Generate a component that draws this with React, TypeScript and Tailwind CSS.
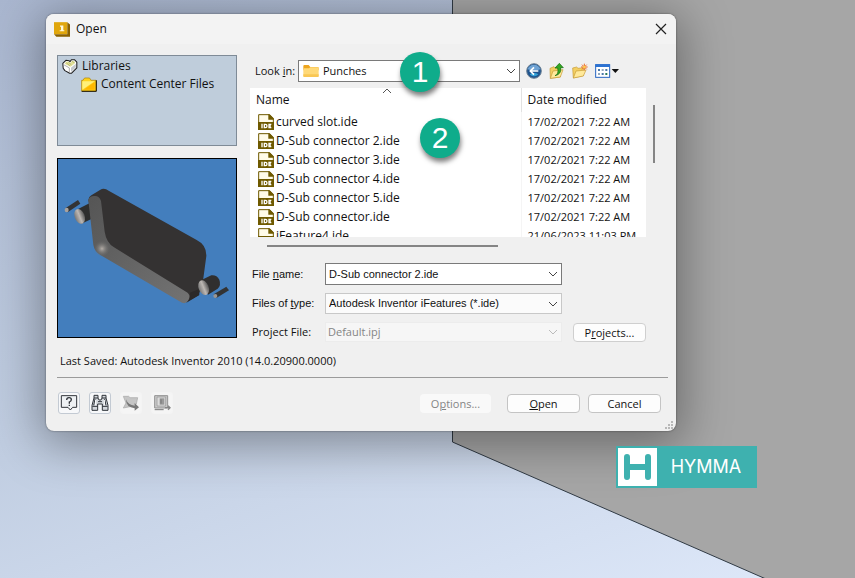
import { useState } from "react";

type IconProps = { className?: string };

const files = [
  { Name: "curved slot.ide", Modified: "17/02/2021 7:22 AM" },
  { Name: "D-Sub connector 2.ide", Modified: "17/02/2021 7:22 AM" },
  { Name: "D-Sub connector 3.ide", Modified: "17/02/2021 7:22 AM" },
  { Name: "D-Sub connector 4.ide", Modified: "17/02/2021 7:22 AM" },
  { Name: "D-Sub connector 5.ide", Modified: "17/02/2021 7:22 AM" },
  { Name: "D-Sub connector.ide", Modified: "17/02/2021 7:22 AM" },
  { Name: "iFeature4.ide", Modified: "21/06/2023 11:03 PM" },
];

const AppIcon = () => (
  <svg viewBox="0 0 48 44" className="w-4 h-[15px] shrink-0">
    <path d="M0 0H40V36H0Z" fill="#e0a60c" />
    <path d="M40 0L48 7V44H7L0 36H40Z" fill="#8a6100" />
    <path d="M18 10H28V24H31V27H17V24H21V14H18Z" fill="#fff8dc" />
  </svg>
);

const LibraryIcon = () => (
  <svg viewBox="0 0 46 44" className="w-4 h-[15px] shrink-0">
    <path d="M2 13L11 4L20 5L23 8L27 2H36L43 9V26L27 42H22L8 34L3 27Z" fill="#fff" stroke="#1b1b1b" strokeWidth="3" strokeLinejoin="round" />
    <path d="M7 14L13 7L20 8L24 12L29 5L38 8L36 14L24 23Z" fill="#e3e09a" />
    <path d="M12 11L23 20M18 9L27 17M29 7L36 11" stroke="#a3ad5c" strokeWidth="2" />
    <path d="M5 17L21 26V39" fill="none" stroke="#8a8a8a" strokeWidth="2" />
    <path d="M26 26L40 14V25L26 38Z" fill="#c4c8ce" />
  </svg>
);

const FolderIcon = () => (
  <svg viewBox="0 0 49 44" className="w-4 h-[15px] shrink-0">
    <path d="M2 9H6L11 2H26L31 9H46V42H2Z" fill="#ffd21c" stroke="#a97c00" strokeWidth="2" />
    <path d="M4 12H42L4 38Z" fill="#fff07a" />
    <path d="M42 14V38H8Z" fill="#ffb800" />
    <path d="M47 9V43H2" fill="none" stroke="#1c1400" strokeWidth="3" />
  </svg>
);

const PunchesFolder = ({ className }: IconProps) => (
  <svg viewBox="0 0 48 40" className={className}>
    <path d="M1 5Q1 2 4 2H17L22 8H44Q47 8 47 11V18H1Z" fill="#eda51f" />
    <path d="M1 14Q1 12 4 12H18L22 9H44Q47 9 47 12V35Q47 38 44 38H4Q1 38 1 35Z" fill="#ffd978" />
    <path d="M1 30H47V35Q47 38 44 38H4Q1 38 1 35Z" fill="#f9c755" />
  </svg>
);

const IdeIcon = () => (
  <svg viewBox="0 0 48 48" className="w-4 h-4 shrink-0">
    <path d="M2 2H34L46 14V46H2Z" fill="#fffbe8" stroke="#6f5a00" strokeWidth="3" />
    <path d="M31 1H35L47 13V17H31Z" fill="#6f5a00" />
    <path d="M0 24H48V48H0Z" fill="#6f5a00" />
    <path d="M12 29V43M19 31H22Q27 31 27 36T22 41H19ZM40 31H33V41H40M33 36H39" fill="none" stroke="#fff" strokeWidth="4" />
  </svg>
);

const BackIcon = () => (
  <svg viewBox="0 0 48 48" className="w-4 h-4">
    <circle cx="24" cy="24" r="22" fill="#20558f" stroke="#6f8294" strokeWidth="3" />
    <path d="M5 19A20 20 0 0 1 43 19Q24 27 5 19Z" fill="#6fa3d4" />
    <path d="M11 34A17 17 0 0 0 37 34Q24 26 11 34Z" fill="#32a3d8" />
    <path d="M24 13L13 24L24 35M14 24H37" fill="none" stroke="#fff" strokeWidth="5" />
  </svg>
);

const UpFolderIcon = () => (
  <svg viewBox="0 0 48 48" className="w-4 h-4">
    <path d="M3 16L15 11L19 15L34 14V42L4 46Z" fill="#f3cf62" stroke="#c69a35" strokeWidth="2" />
    <path d="M4 46L12 24L42 20L34 42Z" fill="#ffe99a" stroke="#c69a35" strokeWidth="2" />
    <path d="M18 38Q30 34 26 15H18L31 1L43 14H35Q38 34 18 38Z" fill="#35a822" stroke="#11690e" strokeWidth="2" />
  </svg>
);

const NewFolderIcon = () => (
  <svg viewBox="0 0 48 48" className="w-4 h-4">
    <path d="M2 15L14 12L18 16L34 14V38L4 45Z" fill="#f3cf62" stroke="#c69a35" strokeWidth="2" />
    <path d="M4 45L12 24L42 21L34 39Z" fill="#ffe99a" stroke="#c69a35" strokeWidth="2" />
    <path d="M37 2V22M27 12H47M30 5L44 19M44 5L30 19" stroke="#ed6a24" strokeWidth="3" />
    <circle cx="37" cy="12" r="4" fill="#ffcf4a" />
  </svg>
);

const ViewIcon = () => (
  <svg viewBox="0 0 72 42" className="w-6 h-[14px]">
    <rect x="2" y="2" width="42" height="38" fill="#fff" stroke="#2464c0" strokeWidth="3" />
    <path d="M1 1H45V9H1Z" fill="#2c72d2" />
    <path d="M9 15H15V21H9ZM31 15H37V21H31ZM20 27H26V33H20Z" fill="#4e79a8" />
    <path d="M20 15H26V21H20ZM9 27H15V33H9Z" fill="#8fa7bf" />
    <path d="M31 27H37V33H31Z" fill="#2b7b58" />
    <path d="M50 15H72L61 27Z" fill="#111" />
  </svg>
);

const Chevron = ({ className }: IconProps) => (
  <svg viewBox="0 0 10 6" className={`pointer-events-none absolute right-1 top-1/2 h-[6px] w-[10px] -translate-y-1/2 ${className}`}>
    <path d="M1 1L5 5L9 1" fill="none" stroke="currentColor" strokeWidth="1" />
  </svg>
);

const Preview = () => (
  <svg viewBox="24 27 534 534" className="block w-full" role="img" aria-label="Preview">
    <defs>
      <linearGradient id="edge" x1="0" y1="0" x2="1" y2="1">
        <stop offset="0" stopColor="#555" />
        <stop offset="1" stopColor="#737373" />
      </linearGradient>
      <linearGradient id="rod" x1="0" y1="0" x2="1" y2="0">
        <stop offset="0" stopColor="#777" />
        <stop offset="0.5" stopColor="#bdb8b4" />
        <stop offset="1" stopColor="#555" />
      </linearGradient>
      <radialGradient id="corner">
        <stop offset="0" stopColor="#b4aea8" />
        <stop offset="1" stopColor="#6a6a6a" stopOpacity="0" />
      </radialGradient>
    </defs>
    <path d="M24 27H558V561H24Z" fill="#437ebd" />
    <path d="M46 175L84 150L91 161L53 187Z" fill="#333" />
    <ellipse cx="50" cy="180" rx="6" ry="7" fill="#a8a29e" />
    <path d="M80 179L118 160L126 206L94 221Z" fill="#2e2e2e" />
    <ellipse cx="89" cy="199" rx="15" ry="23" transform="rotate(-22 89 199)" fill="url(#rod)" />
    <path d="M115 150Q115 141 124 136L150 120Q162 112 176 122L440 270Q470 285 469 318L458 400L446 436L410 456L160 300L140 280Z" fill="#343232" />
    <path d="M115 150Q118 137 135 138Q148 138 153 153L164 245Q169 278 192 292L408 425Q424 434 416 450Q409 463 396 458L151 315Q133 304 130 285Z" fill="url(#edge)" />
    <circle cx="156" cy="296" r="24" fill="url(#corner)" />
    <path d="M408 459L448 435L446 418L420 428Q424 444 408 459Z" fill="#2b2929" />
    <path d="M456 389L484 376Q500 374 508 389Q514 406 503 416L474 434Z" fill="#302f2f" />
    <ellipse cx="461" cy="413" rx="15" ry="23" transform="rotate(-22 461 413)" fill="url(#rod)" />
    <path d="M491 433L529 410L537 421L499 444Z" fill="#333" />
    <ellipse cx="496" cy="438" rx="6" ry="6" fill="#9a9693" />
  </svg>
);

const HelpIcon = () => (
  <svg viewBox="0 0 54 54" className="w-[18px] h-[18px]">
    <path d="M4 5H50V40H38L31 48L24 40H4Z" fill="#eef1f4" stroke="#30343a" strokeWidth="3" />
    <path d="M20 18Q20 11 27 11Q34 11 34 17Q34 21 28 24V29M28 32V36" fill="none" stroke="#30343a" strokeWidth="4" />
  </svg>
);

const BinocularsIcon = () => (
  <svg viewBox="0 0 54 54" className="w-[18px] h-[18px]">
    <path d="M9 4H21V12L24 18H30L33 12V4H45V12L51 34V49H34V30H20V49H3V34L9 12Z" fill="#d3d7dc" stroke="#30343a" strokeWidth="3" />
    <path d="M9 12H21M33 12H45M4 37H20M34 37H50M21 23H33M12 15L8 34M41 15L45 34" stroke="#30343a" strokeWidth="3" />
    <path d="M14 18V34M40 18V34" stroke="#fff" strokeWidth="3" />
  </svg>
);

const GotoIcon = () => (
  <svg viewBox="0 0 54 54" className="w-[18px] h-[18px]">
    <path d="M4 7H20L24 11H47L43 30L34 36L4 42L12 27Z" fill="#c5c5c5" stroke="#a6a6a6" strokeWidth="2" />
    <path d="M12 16Q18 33 38 35V27L51 40L38 50V43Q12 40 12 16Z" fill="#777" />
  </svg>
);

const VaultIcon = () => (
  <svg viewBox="0 0 54 54" className="w-[18px] h-[18px]">
    <path d="M5 5H44V42H5Z" fill="#c9c9c9" stroke="#929292" strokeWidth="3" />
    <path d="M12 9H38V36H12Z" fill="#dcdcdc" stroke="#929292" strokeWidth="2" />
    <path d="M20 13H34V32H20Z" fill="#999" />
    <path d="M24 16V29M5 47H32" stroke="#777" strokeWidth="3" />
    <path d="M36 41H52M45 35L51 41L45 47" fill="none" stroke="#858585" strokeWidth="4" />
  </svg>
);

type ToolProps = { label: string; disabled?: boolean; children: React.ReactNode };

const ToolButton = ({ label, disabled, children }: ToolProps) => (
  <button
    type="button"
    aria-label={label}
    disabled={disabled}
    className="flex h-[22px] w-[22px] items-center justify-center rounded-[3px] border border-[#c3cad3] bg-[#f7f8fa] disabled:border-[#f4f4f4] disabled:bg-[#f5f5f5]"
  >
    {children}
  </button>
);

const Callout = ({ n, className }: { n: number; className: string }) => (
  <div className={`absolute flex h-10 w-10 items-center justify-center rounded-full bg-[#0fac8b] font-['Liberation_Sans',sans-serif] text-[30px] leading-none text-white shadow-[1px_4px_5px_rgba(0,0,0,0.5)] ${className}`}>
    {n}
  </div>
);

const OpenDialog = () => {
  const [FileName, setFileName] = useState("D-Sub connector 2.ide");
  const [Folder, setFolder] = useState("Punches");

  return (
    <div role="dialog" aria-label="Open" className="relative w-full max-w-[630px] rounded-lg bg-[#f0f0f0] shadow-[0_8px_48px_6px_rgba(0,0,0,0.36),0_0_2px_rgba(0,0,0,0.5)]">
      <div className="flex h-[30px] items-center gap-[6px] rounded-t-lg bg-[#f3f3f3] pl-2 pr-[9px]">
        <AppIcon />
        <h1 className="flex-1 text-[12px]">Open</h1>
        <button type="button" aria-label="Close">
          <svg viewBox="0 0 12 12" className="h-3 w-3">
            <path d="M1 1L11 11M11 1L1 11" stroke="#222" strokeWidth="1.200" />
          </svg>
        </button>
      </div>

      <div className="flex gap-[13px] px-[11px] pt-[11px]">
        <div className="flex w-[180px] shrink-0 flex-col gap-3">
          <ul className="h-[91px] border border-[#7f8b97] bg-[#bfcddb] pl-1 pt-[1px] text-[12px] leading-[18px]">
            <li>
              <div className="flex items-center gap-1"><LibraryIcon />Libraries</div>
              <ul className="pl-[19px]">
                <li className="flex items-center gap-1"><FolderIcon />Content Center Files</li>
              </ul>
            </li>
          </ul>
          <div className="border border-black">
            <Preview />
          </div>
        </div>

        <div className="min-w-0 flex-1 pt-[5px]">
          <div className="flex items-center pr-[19px]">
            <label htmlFor="lookin" className="w-12 pl-[5px] text-[11px]">Look <u>i</u>n:</label>
            <div className="relative flex-1">
              <PunchesFolder className="pointer-events-none absolute left-[5px] top-1 h-[14px] w-4" />
              <select id="lookin" value={Folder} onChange={(e) => setFolder(e.target.value)} className="block h-[22px] w-full appearance-none border border-[#7a7a7a] bg-white pl-6 text-[11px] leading-5 outline-none">
                <option>Punches</option>
              </select>
              <Chevron className="text-[#444]" />
            </div>
            <div className="flex w-[126px] items-center gap-[7px] pl-[6px]">
              <button type="button" aria-label="Back"><BackIcon /></button>
              <button type="button" aria-label="Up one level"><UpFolderIcon /></button>
              <button type="button" aria-label="New folder"><NewFolderIcon /></button>
              <button type="button" aria-label="View menu"><ViewIcon /></button>
            </div>
          </div>

          <div className="mt-[6px] flex">
            <div className="relative h-[149px] flex-1 overflow-hidden bg-white">
              <table className="w-full table-fixed border-collapse text-left text-[12px]">
                <thead>
                  <tr className="h-6">
                    <th className="border-r border-[#e2e2e2] p-0 pl-[6px] font-normal">Name</th>
                    <th className="w-[125px] p-0 pl-[6px] font-normal">Date modified</th>
                  </tr>
                </thead>
                <tbody>
                  {files.map((file) => (
                    <tr key={file.Name} className="h-[19px] leading-[19px]">
                      <td className="border-r border-[#f5f5f5] p-0 pl-2">
                        <div className="flex items-center gap-[2px]"><IdeIcon />{file.Name}</div>
                      </td>
                      <td className="whitespace-nowrap p-0 pl-[6px] text-[11px]">{file.Modified}</td>
                    </tr>
                  ))}
                </tbody>
              </table>
              <svg viewBox="0 0 10 6" className="absolute left-[132px] top-0 h-[6px] w-[10px]">
                <path d="M1 5L5 1L9 5" fill="none" stroke="#555" />
              </svg>
            </div>
            <div className="w-[19px] pl-[7px] pt-[17px]">
              <div className="h-[58px] w-[2px] bg-[#858585]" />
            </div>
          </div>
          <div className="pl-[17px] pt-2">
            <div className="h-[2px] w-[58%] bg-[#858585]" />
          </div>

          <div className="mt-4 grid grid-cols-[75px_minmax(0,1fr)_84px] items-center gap-y-2 pr-[19px] text-[11px]">
            <label htmlFor="filename" className="pl-[2px] font-['Liberation_Sans',sans-serif]">File <u>n</u>ame:</label>
            <div className="relative">
              <input id="filename" value={FileName} onChange={(e) => setFileName(e.target.value)} className="block h-[22px] w-full border border-[#7a7a7a] bg-white pl-[3px] font-['Liberation_Sans',sans-serif] outline-none" />
              <Chevron className="text-[#444]" />
            </div>
            <div />
            <label htmlFor="filetype" className="pl-[2px] font-['Liberation_Sans',sans-serif]">Files of <u>t</u>ype:</label>
            <div className="relative">
              <select id="filetype" className="block h-[21px] w-full appearance-none border border-[#c8c8c8] bg-[#fbfbfb] pl-[3px] font-['Liberation_Sans',sans-serif] outline-none">
                <option>Autodesk Inventor iFeatures (*.ide)</option>
              </select>
              <Chevron className="text-[#444]" />
            </div>
            <div />
            <label htmlFor="project" className="pl-[2px]">Project File:</label>
            <div className="relative">
              <select id="project" disabled className="block h-5 w-full appearance-none border border-[#ececec] bg-[#f6f6f6] pl-[2px] text-[#858585] opacity-100 outline-none">
                <option>Default.ipj</option>
              </select>
              <Chevron className="text-[#bbb]" />
            </div>
            <button type="button" className="ml-[11px] h-[19px] rounded border border-[#cfcfcf] bg-[#fdfdfd] leading-none">P<u>r</u>ojects...</button>
          </div>
        </div>
      </div>

      <p className="px-[14px] pt-[11px] text-[11px] leading-4">Last Saved: Autodesk Inventor 2010 (14.0.20900.0000)</p>
      <hr className="ml-[11px] mr-2 mt-2 border-[#9b9b9b]" />
      <div className="flex items-center px-3 pb-[17px] pt-[14px] text-[11px]">
        <div className="flex flex-1 gap-[9px]">
          <ToolButton label="Help"><HelpIcon /></ToolButton>
          <ToolButton label="Find"><BinocularsIcon /></ToolButton>
          <ToolButton label="Go to" disabled><GotoIcon /></ToolButton>
          <ToolButton label="Vault" disabled><VaultIcon /></ToolButton>
        </div>
        <div className="flex gap-2 pr-[3px] leading-none">
          <button type="button" disabled className="mr-2 h-[19px] w-[71px] rounded bg-[#f9f9f9] text-[#858585]">O<u>p</u>tions...</button>
          <button type="button" className="h-[19px] w-[73px] rounded border border-[#c4c4c4] bg-[#fdfdfd]"><u>O</u>pen</button>
          <button type="button" className="h-[19px] w-[73px] rounded border border-[#c4c4c4] bg-[#fdfdfd]">Cancel</button>
        </div>
      </div>
      <svg viewBox="0 0 9 9" className="absolute bottom-[1px] right-[2px] h-[9px] w-[9px]">
        <path d="M6 0H8V2H6ZM3 3H5V5H3ZM6 3H8V5H6ZM0 6H2V8H0ZM3 6H5V8H3ZM6 6H8V8H6Z" fill="#b8b8b8" />
      </svg>
      <Callout n={1} className="left-[354px] top-[38px]" />
      <Callout n={2} className="left-[374px] top-[104px]" />
    </div>
  );
};

const Logo = () => (
  <div className="absolute left-[616px] top-[446px] flex h-[42px] w-[141px] items-center bg-[#3eb1af] p-[2px]">
    <svg viewBox="0 0 39 38" className="h-[38px] w-[39px] shrink-0">
      <path d="M0 0H39V38H0Z" fill="#fff" />
      <path d="M9 9V29M30 9V29M9 19H30" stroke="#3eb1af" strokeWidth="6" strokeLinecap="round" />
    </svg>
    <span className="flex-1 text-center font-['Inter',sans-serif] text-[18px] leading-none text-white">HYMMA</span>
  </div>
);

export default function App() {
  return (
    <div className="relative min-h-screen overflow-hidden bg-linear-160 from-[#a9b6cf] via-[#c0cde1] to-[#dfe9fa] font-['Open_Sans','Noto_Sans',sans-serif] text-[#111]">
      <svg className="absolute inset-0 h-full w-full" aria-hidden="true">
        <path d="M452.500 -1V442L766 579H3000V-1Z" fill="#a6a6a6" stroke="#303a44" />
      </svg>
      <div className="pl-[46px] pt-[14px]">
        <OpenDialog />
      </div>
      <Logo />
    </div>
  );
}
